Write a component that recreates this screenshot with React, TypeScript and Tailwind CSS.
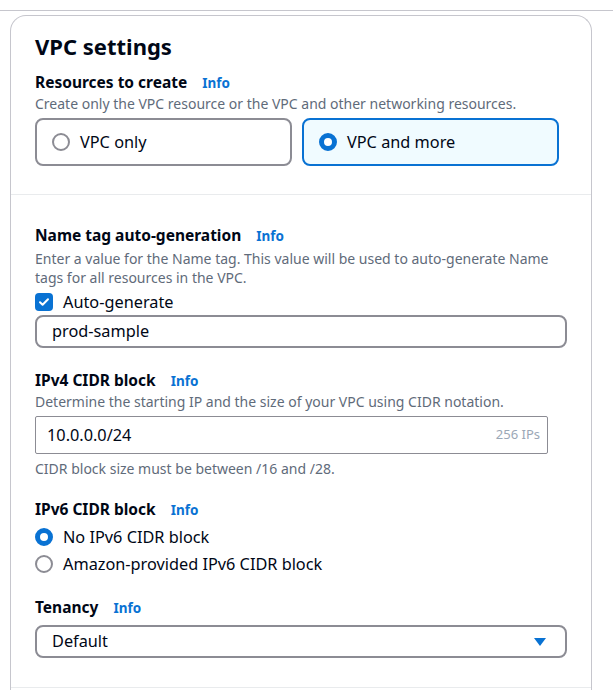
import React from "react";

const font = { fontFamily: '"Noto Sans", "Open Sans", Arial, sans-serif' };

const Info = () => (
  <span className="ml-[15px] text-[13.5px] font-bold text-[#0972d3]">Info</span>
);

const Label = ({ children }: { children: React.ReactNode }) => (
  <div className="flex items-baseline text-[15.5px] leading-[20px] font-bold text-[#000716]">
    <span>{children}</span>
    <Info />
  </div>
);

const Radio = ({ checked }: { checked: boolean }) =>
  checked ? (
    <span className="box-border inline-block h-[18px] w-[18px] shrink-0 rounded-full border-[5px] border-[#0972d3] bg-white" />
  ) : (
    <span className="box-border inline-block h-[18px] w-[18px] shrink-0 rounded-full border-2 border-[#8c8c94] bg-white" />
  );

export default function App() {
  return (
    <div className="h-[690px] w-[613px] overflow-hidden bg-white text-[#000716]" style={font}>
      <div className="h-[10px]" />
      <div className="border-t border-[#c6c6cd]" />
      <div className="ml-[10px] mt-[4px] w-[582px] rounded-t-[16px] border-x border-t border-[#c6c6cd]">
        {/* section 1 */}
        <div className="px-[24px] pt-[16px] pb-[28px]">
          <h2 className="text-[22px] leading-[28px] font-bold">VPC settings</h2>
          <div className="mt-[12px]">
            <Label>Resources to create</Label>
          </div>
          <p className="mt-[2px] text-[14px] leading-[18px] text-[#5f6b7a]">
            Create only the VPC resource or the VPC and other networking resources.
          </p>
          <div className="mt-[5px] flex gap-[10px]">
            <div className="flex h-[48px] w-[257px] items-center gap-[10px] rounded-[8px] border-2 border-[#8c8c94] px-[15px]">
              <Radio checked={false} />
              <span className="text-[16.3px]">VPC only</span>
            </div>
            <div className="flex h-[48px] w-[257px] items-center gap-[10px] rounded-[8px] border-2 border-[#0972d3] bg-[#f0fbff] px-[15px]">
              <Radio checked />
              <span className="text-[16.3px]">VPC and more</span>
            </div>
          </div>
        </div>
        <div className="border-t border-[#e9ebed]" />
        {/* section 2 */}
        <div className="px-[24px] pt-[30px] pb-[29px]">
          <Label>Name tag auto-generation</Label>
          <p className="mt-[3px] text-[14px] leading-[19px] text-[#5f6b7a]">
            Enter a value for the Name tag. This value will be used to auto-generate Name tags for all resources in the VPC.
          </p>
          <div className="mt-[5px] flex h-[20px] items-center gap-[10px]">
            <span className="flex h-[18px] w-[18px] items-center justify-center rounded-[4px] bg-[#0972d3]">
              <svg width="12" height="12" viewBox="0 0 12 12" fill="none">
                <path d="M2 6.2l2.6 2.6L10 3.2" stroke="white" strokeWidth="2" strokeLinecap="round" strokeLinejoin="round" />
              </svg>
            </span>
            <span className="text-[16.3px]">Auto-generate</span>
          </div>
          <div className="mt-[3px] flex h-[33px] w-[532px] items-center rounded-[8px] border-2 border-[#8c8c94] px-[15px] text-[16.3px]">
            prod-sample
          </div>

          <div className="mt-[22px]">
            <Label>IPv4 CIDR block</Label>
          </div>
          <p className="mt-[2px] text-[14px] leading-[18px] text-[#5f6b7a]">
            Determine the starting IP and the size of your VPC using CIDR notation.
          </p>
          <div className="mt-[5px] flex h-[38px] w-[513px] items-center justify-between rounded-[2px] border border-[#8c8c94] pl-[11px] pr-[7px]">
            <span className="text-[16.3px]">10.0.0.0/24</span>
            <span className="text-[13px] text-[#9ba7b6]">256 IPs</span>
          </div>
          <p className="mt-[6px] text-[14px] leading-[18px] text-[#5f6b7a]">
            CIDR block size must be between /16 and /28.
          </p>

          <div className="mt-[21px]">
            <Label>IPv6 CIDR block</Label>
          </div>
          <div className="mt-[7px] flex h-[20px] items-center gap-[10px]">
            <Radio checked />
            <span className="text-[16.3px]">No IPv6 CIDR block</span>
          </div>
          <div className="mt-[7px] flex h-[20px] items-center gap-[10px]">
            <Radio checked={false} />
            <span className="text-[16.3px]">Amazon-provided IPv6 CIDR block</span>
          </div>

          <div className="mt-[23px]">
            <Label>Tenancy</Label>
          </div>
          <div className="mt-[7px] flex h-[33px] w-[532px] items-center justify-between rounded-[8px] border-2 border-[#8c8c94] pl-[15px] pr-[18px]">
            <span className="text-[16.3px]">Default</span>
            <svg width="14" height="10" viewBox="0 0 14 10">
              <path d="M1 1h12L7 9z" fill="#0972d3" />
            </svg>
          </div>
        </div>
        <div className="border-t border-[#e9ebed]" />
        <div className="h-[20px]" />
      </div>
    </div>
  );
}
